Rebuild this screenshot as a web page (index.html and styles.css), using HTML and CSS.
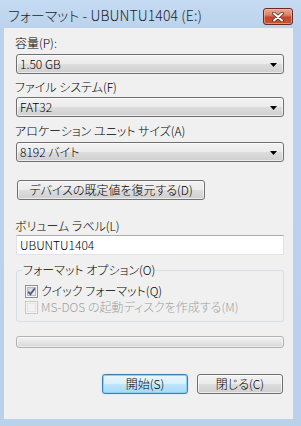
FILE: index.html
```html
<!DOCTYPE html>
<html lang="ja">
<head>
<meta charset="utf-8">
<title>フォーマット</title>
<link rel="stylesheet" href="styles.css">
</head>
<body>
<div class="window">
  <div class="titlebar">
    <span class="title">フォーマット - UBUNTU1404 (E:)</span>
    <button class="close" aria-label="閉じる">
      <svg width="14" height="10" viewBox="0 0 14 10">
        <path d="M3 1.5 L11 8.5 M11 1.5 L3 8.5" stroke="#5a2a20" stroke-width="3.6" stroke-linecap="round"/>
        <path d="M3 1.5 L11 8.5 M11 1.5 L3 8.5" stroke="#ffffff" stroke-width="2" stroke-linecap="round"/>
      </svg>
    </button>
  </div>
  <div class="client">
    <div class="lbl l1">容量(P):</div>
    <div class="combo c1"><span>1.50 GB</span><svg class="arrow" width="7" height="4" viewBox="0 0 7 4"><path d="M0 0 H7 L3.5 4 Z" fill="#000"/></svg></div>
    <div class="lbl l2">ファイル システム(F)</div>
    <div class="combo c2"><span>FAT32</span><svg class="arrow" width="7" height="4" viewBox="0 0 7 4"><path d="M0 0 H7 L3.5 4 Z" fill="#000"/></svg></div>
    <div class="lbl l3">アロケーション ユニット サイズ(A)</div>
    <div class="combo c3"><span>8192 バイト</span><svg class="arrow" width="7" height="4" viewBox="0 0 7 4"><path d="M0 0 H7 L3.5 4 Z" fill="#000"/></svg></div>
    <button class="btn restore">デバイスの既定値を復元する(D)</button>
    <div class="lbl l4">ボリューム ラベル(L)</div>
    <div class="input">UBUNTU1404</div>
    <fieldset class="group">
      <legend>フォーマット オプション(O)</legend>
      <div class="row">
        <svg class="chk" width="13" height="13" viewBox="0 0 13 13">
          <defs>
            <linearGradient id="cg" x1="0" y1="0" x2="1" y2="1">
              <stop offset="0" stop-color="#cbcfd5"/>
              <stop offset="1" stop-color="#f6f6f6"/>
            </linearGradient>
          </defs>
          <rect x="0.5" y="0.5" width="12" height="12" fill="#f4f4f4" stroke="#8e8f8f"/>
          <rect x="2.5" y="2.5" width="8" height="8" fill="url(#cg)" stroke="#b6bac0"/>
          <path d="M3.2 6.6 L5.4 9.2 L9.8 3.4" fill="none" stroke="#4a5e8e" stroke-width="1.8"/>
        </svg>
        <span>クイック フォーマット(Q)</span>
      </div>
      <div class="row disabled">
        <svg class="chk" width="13" height="13" viewBox="0 0 13 13">
          <rect x="0.5" y="0.5" width="12" height="12" fill="#f4f4f4" stroke="#c9c9c9"/>
          <rect x="2.5" y="2.5" width="8" height="8" fill="#f2f2f2" stroke="#e3e3e3"/>
        </svg>
        <span>MS-DOS の起動ディスクを作成する(M)</span>
      </div>
    </fieldset>
    <div class="progress"></div>
    <div class="actions">
      <button class="btn default">開始(S)</button>
      <button class="btn">閉じる(C)</button>
    </div>
  </div>
</div>
</body>
</html>
```
FILE: styles.css
```css
* { box-sizing: border-box; }
html, body { margin: 0; padding: 0; background: #b9d1ea; }
body {
  font-family: "Noto Sans CJK JP", "Noto Sans", sans-serif;
  font-size: 12px;
  font-weight: 300;
  color: #000;
  font-feature-settings: "palt";
}
.window {
  width: 301px;
  height: 426px;
  display: flex;
  flex-direction: column;
  background: linear-gradient(#c5dbf2 0, #bad2ec 30px, #b9d1ea 100%);
}
.titlebar {
  height: 28px;
  display: flex;
  align-items: flex-start;
  justify-content: space-between;
  padding: 0 8px 0 8px;
}
.title {
  font-size: 14px;
  line-height: 18px;
  margin-top: 6px;
  color: #1e1e1e;
  letter-spacing: 0.1px;
}
.close {
  margin-top: 8px;
  width: 30px;
  height: 17px;
  padding: 0;
  border: 1px solid #6b2a1e;
  border-radius: 3px;
  background: linear-gradient(#e9a899 0, #dd8166 40%, #c8472a 55%, #c5533a 100%);
  box-shadow: inset 0 0 0 1px rgba(255,200,190,0.5);
  display: flex;
  align-items: center;
  justify-content: center;
}
.client {
  flex: 1;
  margin: 0 8px 7px 4px;
  background: #f0f0f0;
  padding: 0 9px 0 11px;
  display: flex;
  flex-direction: column;
  align-items: flex-start;
}
.lbl { line-height: 14px; height: 14px; white-space: nowrap; }
.l1 { margin-top: 8px; }
.l2 { margin-top: 6px; }
.l3 { margin-top: 7px; }
.l4 { margin-top: 19px; }
.combo {
  width: 268px;
  height: 20px;
  margin-left: 1px;
  border: 1px solid #707070;
  border-radius: 3px;
  background: linear-gradient(#f2f2f2 0, #ebebeb 50%, #dddddd 51%, #cfcfcf 100%);
  box-shadow: inset 0 0 0 1px rgba(255,255,255,0.6);
  display: flex;
  align-items: center;
  justify-content: space-between;
  padding: 0 6px 0 3px;
  line-height: 16px;
}
.c1 { margin-top: 4px; }
.c2 { margin-top: 3px; }
.c3 { margin-top: 4px; }
.arrow { margin-top: 1px; }
.btn {
  font: inherit;
  color: #000;
  height: 20px;
  border: 1px solid #707070;
  border-radius: 3px;
  background: linear-gradient(#f2f2f2 0, #ebebeb 50%, #dddddd 51%, #cfcfcf 100%);
  box-shadow: inset 0 0 0 1px rgba(255,255,255,0.6);
  padding: 0;
  line-height: 16px;
}
.restore { margin-top: 18px; margin-left: 2px; width: 188px; }
.input {
  margin-top: 2px;
  margin-left: 1px;
  width: 268px;
  height: 20px;
  background: #fff;
  border: 1px solid #e2e3ea;
  border-top-color: #abadb3;
  padding: 0 3px;
  line-height: 18px;
}
.group {
  margin: 8px 0 0 1px;
  width: 268px;
  border: 1px solid #d5dfe5;
  border-radius: 3px;
  padding: 7px 8px 7px 8px;
  display: flex;
  flex-direction: column;
  gap: 2px;
}
.group legend {
  padding: 0 1px;
  line-height: 14px;
  margin-left: -3px;
}
.row {
  display: flex;
  align-items: center;
  gap: 3px;
  height: 14px;
  line-height: 14px;
  white-space: nowrap;
}
.disabled { color: #a0a0a0; }
.chk { flex: none; }
.progress {
  margin-top: 14px;
  margin-left: 1px;
  width: 268px;
  height: 12px;
  border: 1px solid #b2b2b2;
  border-radius: 3px;
  background: linear-gradient(#f3f3f3 0, #e6e6e6 50%, #d6d6d6 100%);
  box-shadow: inset 0 0 0 1px rgba(255,255,255,0.5);
}
.actions {
  margin-top: 26px;
  margin-left: 1px;
  width: 268px;
  display: flex;
  justify-content: flex-end;
  gap: 9px;
  padding-right: 1px;
}
.actions .btn { width: 86px; }
.default {
  border-color: #3c7fb1;
  background: linear-gradient(#eaf6fd 0, #d9f0fc 50%, #bee6fd 51%, #a7d9f5 100%);
  box-shadow: inset 0 0 0 1px #8fd0f5, 0 0 1px #6ec0f0;
}
```
